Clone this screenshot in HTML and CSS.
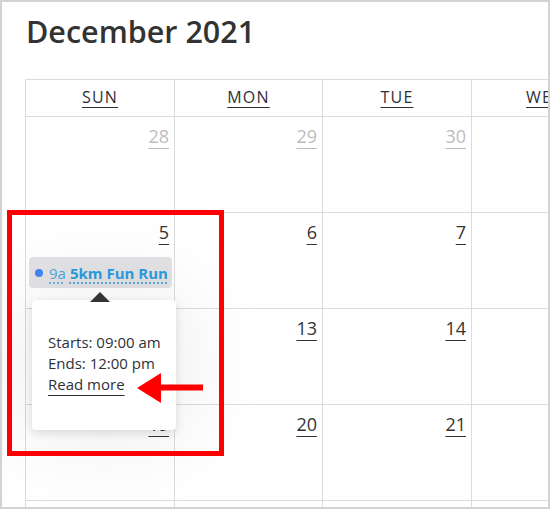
FILE: index.html
```html
<!DOCTYPE html>
<html>
<head>
<meta charset="utf-8">
<link rel="stylesheet" href="styles.css">
</head>
<body>
<div class="frame">
  <h1 class="title">December 2021</h1>
  <div class="cal">
    <div class="dow"><span>SUN</span></div>
    <div class="dow"><span>MON</span></div>
    <div class="dow"><span>TUE</span></div>
    <div class="dow"><span>WED</span></div>
    <div class="dow"><span>THU</span></div>
    <div class="dow"><span>FRI</span></div>
    <div class="dow"><span>SAT</span></div>

    <div class="day muted"><span class="num">28</span></div>
    <div class="day muted"><span class="num">29</span></div>
    <div class="day muted"><span class="num">30</span></div>
    <div class="day"><span class="num">1</span></div>
    <div class="day"><span class="num">2</span></div>
    <div class="day"><span class="num">3</span></div>
    <div class="day"><span class="num">4</span></div>

    <div class="day"><span class="num">5</span>
      <div class="chip"><span class="dot"></span><span class="time">9a</span><span class="name">5km Fun Run</span></div>
    </div>
    <div class="day"><span class="num">6</span></div>
    <div class="day"><span class="num">7</span></div>
    <div class="day"><span class="num">8</span></div>
    <div class="day"><span class="num">9</span></div>
    <div class="day"><span class="num">10</span></div>
    <div class="day"><span class="num">11</span></div>

    <div class="day"><span class="num">12</span></div>
    <div class="day"><span class="num">13</span></div>
    <div class="day"><span class="num">14</span></div>
    <div class="day"><span class="num">15</span></div>
    <div class="day"><span class="num">16</span></div>
    <div class="day"><span class="num">17</span></div>
    <div class="day"><span class="num">18</span></div>

    <div class="day"><span class="num">19</span></div>
    <div class="day"><span class="num">20</span></div>
    <div class="day"><span class="num">21</span></div>
    <div class="day"><span class="num">22</span></div>
    <div class="day"><span class="num">23</span></div>
    <div class="day"><span class="num">24</span></div>
    <div class="day"><span class="num">25</span></div>

    <div class="day"><span class="num">26</span></div>
    <div class="day"><span class="num">27</span></div>
    <div class="day"><span class="num">28</span></div>
    <div class="day"><span class="num">29</span></div>
    <div class="day"><span class="num">30</span></div>
    <div class="day"><span class="num">31</span></div>
    <div class="day muted"><span class="num">1</span></div>
  </div>

  <div class="popup">
    <div class="popup-arrow"></div>
    <div class="line">Starts: 09:00 am</div>
    <div class="line">Ends: 12:00 pm</div>
    <div class="line"><a class="more">Read more</a></div>
  </div>

  <div class="mark"></div>
  <svg class="arrow" width="70" height="36" viewBox="0 0 70 36">
    <rect x="24" y="14.5" width="44" height="6" fill="#ff0000"/>
    <polygon points="2,18 26,3 26,33" fill="#ff0000"/>
  </svg>
</div>
</body>
</html>
```
FILE: styles.css
```css
html, body {
  margin: 0;
  padding: 0;
  background: #fff;
}

.frame {
  position: relative;
  width: 550px;
  height: 509px;
  box-sizing: border-box;
  border: 2px solid #d3d3d3;
  padding-left: 23px;
  overflow: hidden;
  background: #fff;
  font-family: "Open Sans", sans-serif;
  color: #333;
}

.title {
  margin: 11px 0 30px 1px;
  font-size: 30.5px;
  line-height: 36px;
  font-weight: 600;
  color: #333;
}

.cal {
  display: grid;
  grid-template-columns: 149px 148px 149px 148px 149px 148px 149px;
  grid-template-rows: 37px repeat(5, 96px);
  width: max-content;
  border-top: 1px solid #dcdcdc;
  border-left: 1px solid #dcdcdc;
}

.dow, .day {
  box-sizing: border-box;
  border-right: 1px solid #dcdcdc;
  border-bottom: 1px solid #dcdcdc;
}

.dow {
  text-align: center;
  font-size: 16px;
  line-height: 34px;
  letter-spacing: 1.2px;
  color: #2f2f3a;
}

.dow span {
  text-decoration: underline;
  text-underline-offset: 4px;
  text-decoration-thickness: 1px;
}

.day {
  padding: 7px 5px 0 0;
  text-align: right;
}

.num {
  font-size: 18px;
  line-height: 24px;
  color: #333;
  text-decoration: underline;
  text-underline-offset: 5px;
  text-decoration-thickness: 1px;
}

.day.muted .num {
  color: #bdbdbd;
}

.chip {
  display: flex;
  align-items: center;
  margin: 13px 0 0 3px;
  width: 143px;
  height: 31px;
  box-sizing: border-box;
  padding-left: 6px;
  background: #e3e3e5;
  border-radius: 4px;
  text-align: left;
  font-size: 15px;
  white-space: nowrap;
}

.dot {
  width: 8px;
  height: 8px;
  border-radius: 50%;
  background: #4285f4;
  margin-right: 6px;
}

.time {
  color: #4ea5e2;
  text-decoration: underline dotted;
  text-underline-offset: 4px;
}

.name {
  margin-left: 4px;
  color: #2a9de0;
  font-weight: 700;
  text-decoration: underline dotted;
  text-underline-offset: 4px;
}

.popup {
  position: absolute;
  left: 30px;
  top: 298px;
  width: 144px;
  height: 130px;
  box-sizing: border-box;
  padding: 32px 0 0 16px;
  background: #fff;
  border-radius: 4px;
  box-shadow: 0 3px 10px rgba(0, 0, 0, 0.12), 0 0 90px 12px rgba(0, 0, 0, 0.07);
  font-size: 15px;
  line-height: 21px;
  color: #2f2f3a;
}

.popup-arrow {
  position: absolute;
  left: 58px;
  top: -8px;
  width: 0;
  height: 0;
  border-left: 10px solid transparent;
  border-right: 10px solid transparent;
  border-bottom: 10px solid #333;
}

.more {
  color: #2f2f3a;
  text-decoration: underline;
  text-underline-offset: 5px;
  text-decoration-thickness: 1px;
}

.mark {
  position: absolute;
  left: 5px;
  top: 208px;
  width: 217px;
  height: 246px;
  box-sizing: border-box;
  border: 5px solid #ff0000;
}

.arrow {
  position: absolute;
  left: 133px;
  top: 368px;
}
```
